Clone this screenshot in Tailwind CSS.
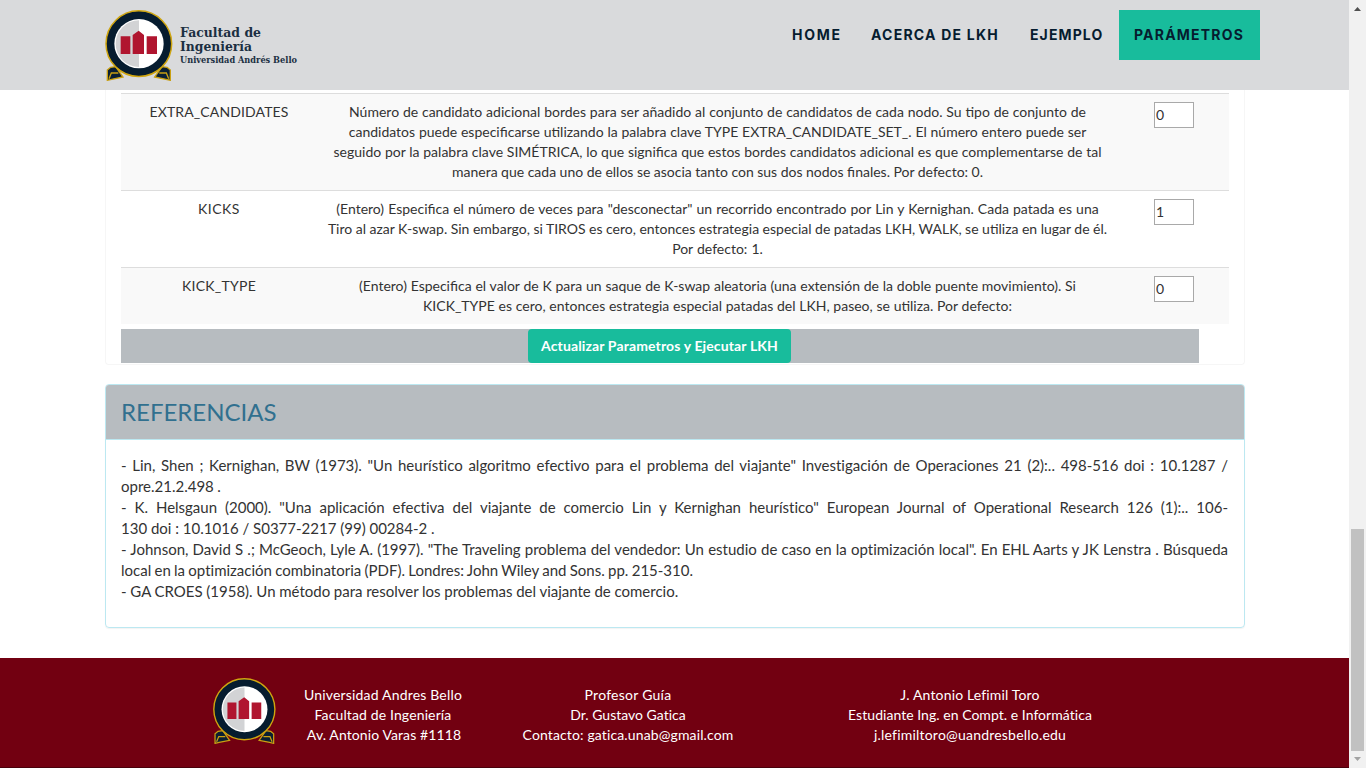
<!DOCTYPE html>
<html lang="es">
<head>
<meta charset="utf-8">
<title>LKH - Parámetros</title>
<script src="https://cdn.jsdelivr.net/npm/@tailwindcss/browser@4"></script>
</head>
<body class="w-[1366px] h-[768px] overflow-hidden bg-white flex font-['Lato',sans-serif] text-[14px] leading-[20px] text-[#333]">
<svg width="0" height="0" class="absolute">
  <symbol id="crest" viewBox="15 15 206 216">
    <path d="M33 190 L23 198 L23 229 L36 226 L70 219 L48 188Z M202 190 L212 198 L212 229 L199 226 L165 219 L187 188Z" fill="#0a1f33" stroke="#c9a013" stroke-width="4"/>
    <path d="M28 224 L35 207 L56 207" fill="none" stroke="#c9a013" stroke-width="4"/>
    <path d="M207 224 L200 207 L179 207" fill="none" stroke="#c9a013" stroke-width="4"/>
    <circle cx="117.5" cy="119" r="98.5" fill="#061c2f" stroke="#cfa510" stroke-width="4.5"/>
    <circle cx="118" cy="119" r="74" fill="#fff"/>
    <path d="M118 49 A70 70 0 0 0 118 189Z" fill="#d2d3d5"/>
    <path d="M63 97H92V150H63Z M141 97H172V150H141Z M99 150V93L117 80L133 93V150Z" fill="#b0152f"/>
  </symbol>
</svg>
<div class="w-[1349px] h-[768px] flex flex-col shrink-0">
  <header class="h-[90px] shrink-0 bg-[#d9dadc] flex pl-[104px]">
    <svg class="w-[70px] h-[72px] mt-[9px] shrink-0"><use href="#crest"/></svg>
    <svg class="w-[136px] h-[50px] mt-[20px] shrink-0 ml-[5px]" fill="#1b2f42" font-family="DejaVu Serif" font-weight="bold">
      <text x="1" y="16.5" font-size="13" textLength="81" lengthAdjust="spacingAndGlyphs">Facultad de</text>
      <text x="1" y="30.5" font-size="13" textLength="72" lengthAdjust="spacingAndGlyphs">Ingeniería</text>
      <text x="1" y="42.5" font-size="9.5" textLength="117" lengthAdjust="spacingAndGlyphs">Universidad Andrés Bello</text>
    </svg>
    <nav class="ml-[462px] mt-[10px] flex h-[50px] font-['Inter'] font-bold text-[14px] leading-[50px] text-[#061c2f] whitespace-nowrap">
      <a class="w-[79px] pl-[15px] tracking-[1.7px]">HOME</a>
      <a class="w-[159px] pl-[15px] tracking-[1.22px]">ACERCA DE LKH</a>
      <a class="w-[104px] pl-[15px] tracking-[1.1px]">EJEMPLO</a>
      <a class="w-[141px] pl-[15px] tracking-[1.2px] bg-[#18bc9c]">PARÁMETROS</a>
    </nav>
  </header>

  <section class="ml-[105px] w-[1140px] h-[275px] shrink-0 border border-t-0 border-[#f6f6f6] rounded-b-[4px] px-[15px] pt-[3px]">
    <div class="w-[1108px] text-center whitespace-nowrap">
      <div class="flex h-[97px] border-t border-[#ddd] bg-[#f9f9f9] pt-[8px]">
        <div class="w-[196px] tracking-[0.13px]">EXTRA_CANDIDATES</div>
        <div class="w-[801px]">
          <p class="[word-spacing:0.25px]">Número de candidato adicional bordes para ser añadido al conjunto de candidatos de cada nodo. Su tipo de conjunto de</p>
          <p class="[word-spacing:0.22px]">candidatos puede especificarse utilizando la palabra clave TYPE EXTRA_CANDIDATE_SET_. El número entero puede ser</p>
          <p class="[word-spacing:0.16px]">seguido por la palabra clave SIMÉTRICA, lo que significa que estos bordes candidatos adicional es que complementarse de tal</p>
          <p class="[word-spacing:-0.08px]">manera que cada uno de ellos se asocia tanto con sus dos nodos finales. Por defecto: 0.</p>
        </div>
        <input value="0" class="ml-[36px] w-[40px] h-[26px] border border-[#a9a9a9] bg-white px-px pb-[2px] text-[14px]">
      </div>
      <div class="flex h-[77px] border-t border-[#ddd] pt-[8px]">
        <div class="w-[196px] tracking-[0.5px]">KICKS</div>
        <div class="w-[801px]">
          <p class="[word-spacing:0.49px]">(Entero) Especifica el número de veces para "desconectar" un recorrido encontrado por Lin y Kernighan. Cada patada es una</p>
          <p class="[word-spacing:-0.07px]">Tiro al azar K-swap. Sin embargo, si TIROS es cero, entonces estrategia especial de patadas LKH, WALK, se utiliza en lugar de él.</p>
          <p class="[word-spacing:0.5px]">Por defecto: 1.</p>
        </div>
        <input value="1" class="ml-[36px] w-[40px] h-[26px] border border-[#a9a9a9] bg-white px-px pb-[2px] text-[14px]">
      </div>
      <div class="flex h-[57px] border-t border-[#ddd] bg-[#f9f9f9] pt-[8px]">
        <div class="w-[196px] tracking-[0.25px]">KICK_TYPE</div>
        <div class="w-[801px]">
          <p class="[word-spacing:0.2px]">(Entero) Especifica el valor de K para un saque de K-swap aleatoria (una extensión de la doble puente movimiento). Si</p>
          <p class="[word-spacing:0.15px]">KICK_TYPE es cero, entonces estrategia especial patadas del LKH, paseo, se utiliza. Por defecto:</p>
        </div>
        <input value="0" class="ml-[36px] w-[40px] h-[26px] border border-[#a9a9a9] bg-white px-px pb-[2px] text-[14px]">
      </div>
    </div>
    <div class="mt-[5px] w-[1078px] h-[34px] bg-[#b7bcc0] flex justify-center pr-px">
      <button class="w-[263px] h-[34px] rounded-[4px] bg-[#18bc9c] text-white font-bold tracking-[0.13px] whitespace-nowrap">Actualizar Parametros y Ejecutar LKH</button>
    </div>
  </section>

  <section class="ml-[105px] mt-[19px] w-[1140px] h-[244px] shrink-0 border border-[#bce8f1] rounded-[4px] shadow-[0_1px_1px_rgba(0,0,0,0.05)]">
    <h3 class="h-[55px] pl-[15px] bg-[#b7bcc0] border-b border-[#bce8f1] rounded-t-[3px] text-[24px] leading-[53px] text-[#31708f]">REFERENCIAS</h3>
    <div class="pl-[15px] w-[1122px] pt-[15px] text-[15px] leading-[21px] whitespace-nowrap [font-variant-ligatures:no-common-ligatures]">
      <p class="[text-align-last:justify]">- Lin, Shen ; Kernighan, BW (1973). "Un heurístico algoritmo efectivo para el problema del viajante" Investigación de Operaciones 21 (2):.. 498-516 doi : 10.1287 /</p>
      <p class="[word-spacing:-0.5px]">opre.21.2.498 .</p>
      <p class="[text-align-last:justify]">- K. Helsgaun (2000). "Una aplicación efectiva del viajante de comercio Lin y Kernighan heurístico" European Journal of Operational Research 126 (1):.. 106-</p>
      <p>130 doi : 10.1016 / S0377-2217 (99) 00284-2 .</p>
      <p class="[text-align-last:justify]">- Johnson, David S .; McGeoch, Lyle A. (1997). "The Traveling problema del vendedor: Un estudio de caso en la optimización local". En EHL Aarts y JK Lenstra . Búsqueda</p>
      <p class="[word-spacing:-0.55px]">local en la optimización combinatoria (PDF). Londres: John Wiley and Sons. pp. 215-310.</p>
      <p class="[word-spacing:-0.15px]">- GA CROES (1958). Un método para resolver los problemas del viajante de comercio.</p>
    </div>
  </section>

  <footer class="mt-[30px] h-[110px] shrink-0 bg-[#720011] border-b border-[#4a000b] flex text-white text-center whitespace-nowrap [font-variant-ligatures:no-common-ligatures]">
    <svg class="ml-[212px] mt-[19px] w-[65px] h-[67px] shrink-0"><use href="#crest"/></svg>
    <div class="ml-[6px] w-[200px] pt-[27px]">
      <p class="tracking-[0.18px]">Universidad Andres Bello</p>
      <p class="tracking-[0.13px]">Facultad de Ingeniería</p>
      <p class="tracking-[0.1px] pl-[2px]">Av. Antonio Varas #1118</p>
    </div>
    <div class="ml-[25px] w-[240px] pt-[27px]">
      <p class="tracking-[0.26px]">Profesor Guía</p>
      <p>Dr. Gustavo Gatica</p>
      <p class="tracking-[0.13px]">Contacto: gatica.unab@gmail.com</p>
    </div>
    <div class="ml-[82px] w-[280px] pt-[27px]">
      <p class="tracking-[0.15px]">J. Antonio Lefimil Toro</p>
      <p class="tracking-[0.04px]">Estudiante Ing. en Compt. e Informática</p>
      <p class="tracking-[0.21px]">j.lefimiltoro@uandresbello.edu</p>
    </div>
  </footer>
</div>
<div class="w-[17px] h-[768px] bg-[#f1f1f1] flex flex-col items-center shrink-0">
  <svg class="w-[17px] h-[17px] shrink-0"><path d="M5 11L8.5 7L12 11Z" fill="#505050"/></svg>
  <div class="mt-[512px] w-[13px] h-[222px] bg-[#c1c1c1]"></div>
  <svg class="w-[17px] h-[17px] shrink-0"><path d="M5 6L8.5 10L12 6Z" fill="#a3a3a3"/></svg>
</div>
</body>
</html>
